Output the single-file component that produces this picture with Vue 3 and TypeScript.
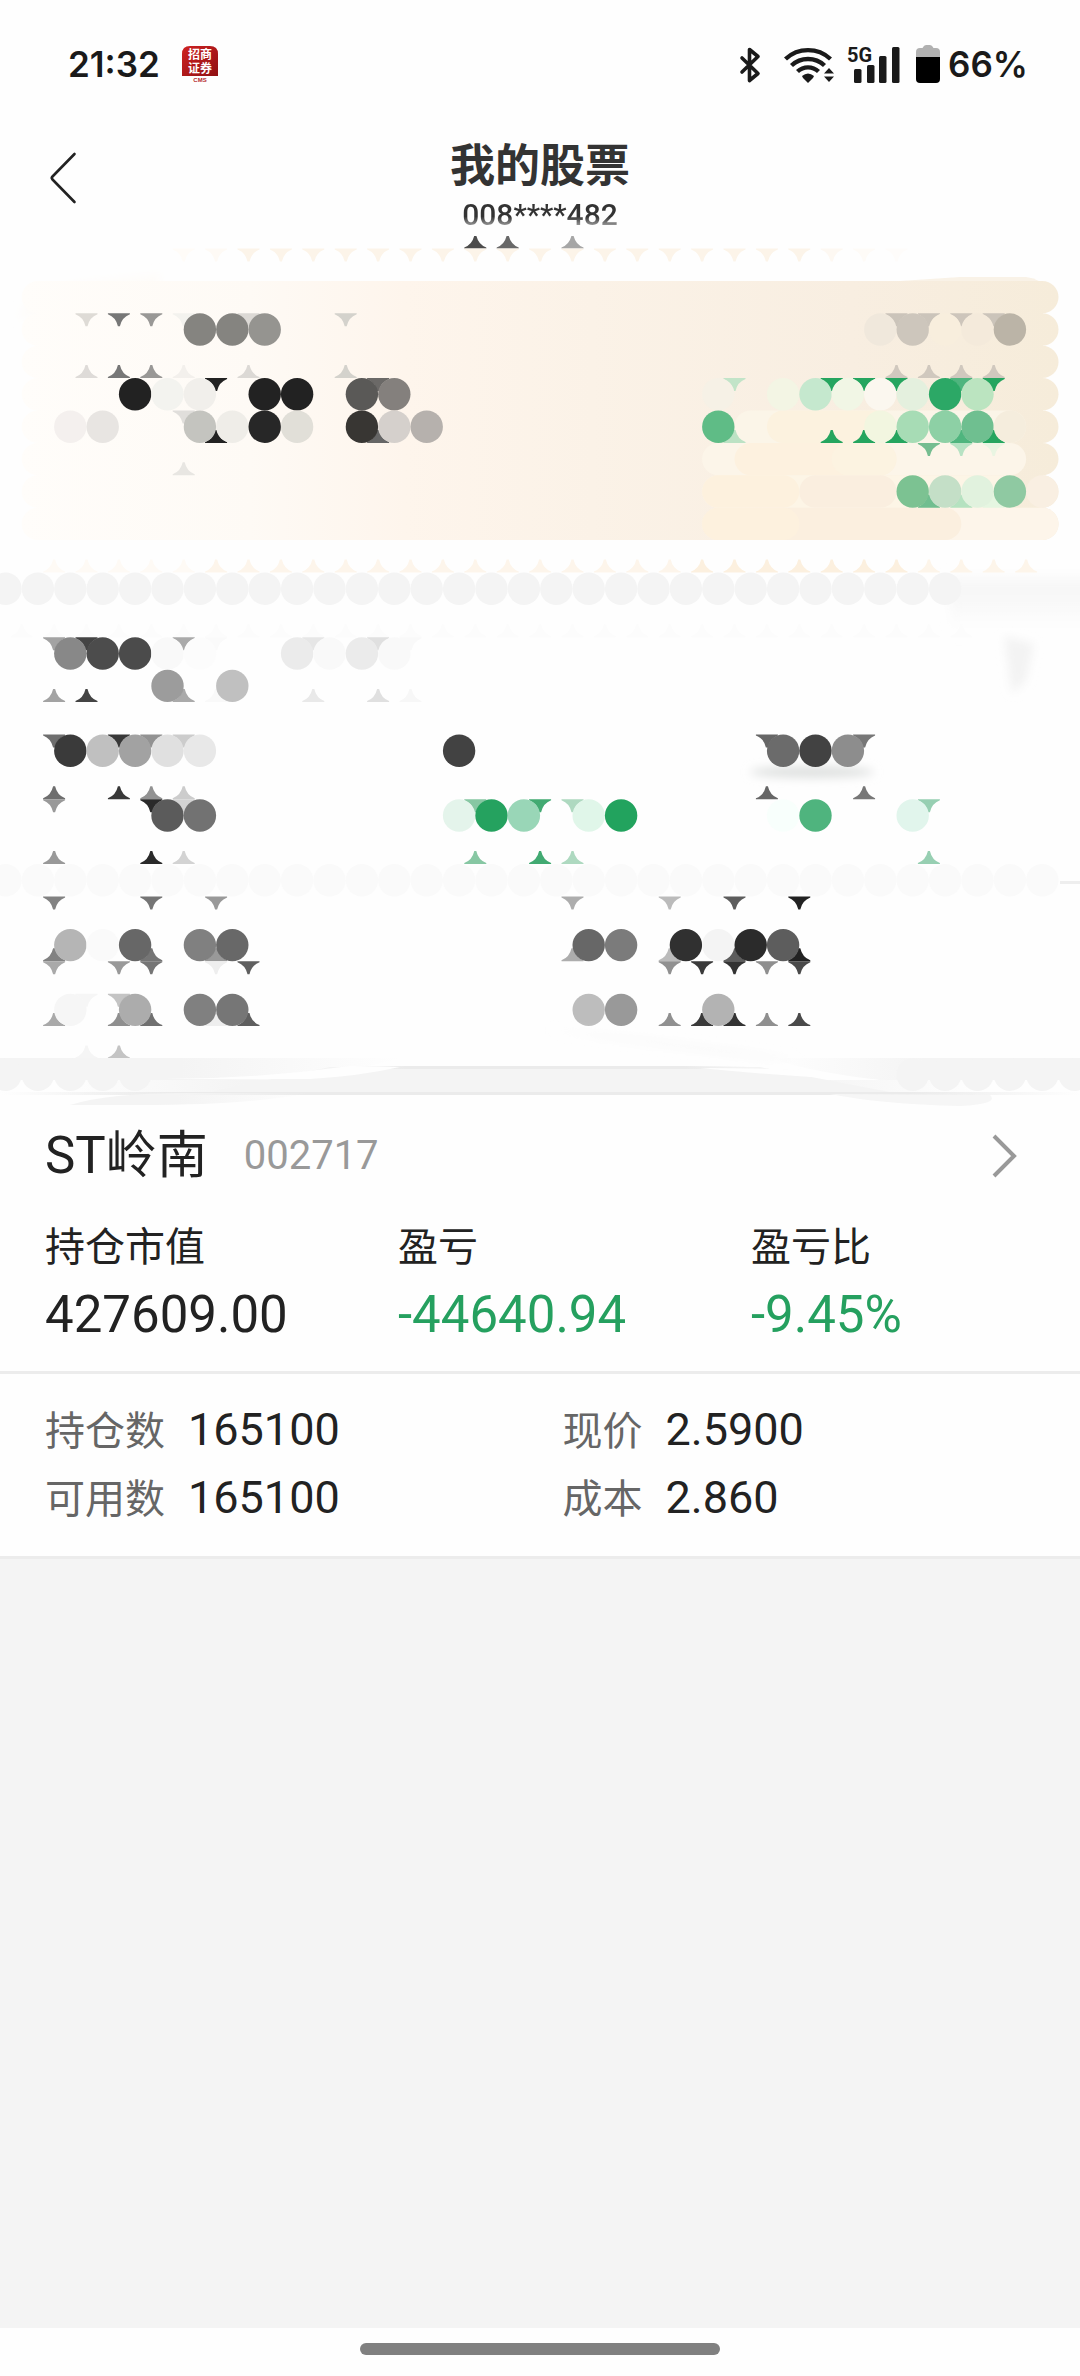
<script setup lang="ts">
type Mark = [number, string]
interface MosaicRow {
  row: number
  dots?: Mark[]
  down?: Mark[]
  up?: Mark[]
}
interface Patch {
  row: number
  from: number
  to: number
  color: string
}

const CELL = 32.4
const ORIGIN = 5.5
const RADIUS = CELL / 2

const centre = (n: number): number => ORIGIN + n * CELL
const repeat = (from: number, to: number, color: string): Mark[] =>
  Array.from({ length: to - from + 1 }, (_, k): Mark => [from + k, color])

// Spikes are the gaps left between neighbouring dots, on one side of a row edge.
const spike = (col: number, row: number, dir: 1 | -1): string => {
  const x = centre(col) + RADIUS
  const y = centre(row) - dir * RADIUS
  return `M${x - 11} ${y}V${y + dir}Q${x - 3} ${y + 4 * dir} ${x - 1} ${y + 13 * dir}H${x + 1}Q${x + 3} ${y + 4 * dir} ${x + 11} ${y + dir}V${y}Z`
}

const cardRows = [9, 10, 11, 12, 13, 14, 15, 16]

const patches: Patch[] = [
  { row: 13, from: 23, to: 31, color: '#fbf5e8' },
  { row: 13, from: 24, to: 27, color: '#fcf2df' },
  { row: 14, from: 22, to: 31, color: '#fcf5e9' },
  { row: 14, from: 23, to: 27, color: '#fdf1df' },
  { row: 14, from: 26, to: 27, color: '#fcf3e1' },
  { row: 15, from: 22, to: 31, color: '#fdf5e6' },
  { row: 15, from: 22, to: 24, color: '#fdf1de' },
  { row: 15, from: 25, to: 27, color: '#faeedf' },
  { row: 15, from: 32, to: 32, color: '#f9efe2' },
  { row: 16, from: 22, to: 32, color: '#fdf5ea' },
  { row: 16, from: 22, to: 29, color: '#fbefdf' },
  { row: 16, from: 22, to: 24, color: '#fdf1de' },
]

const G = '#25a55f'
const rows: MosaicRow[] = [
  { row: 7, up: [[14, '#4c4c4c'], [15, '#686868'], [17, '#a6a6a6']] },
  { row: 8, down: [[5, '#fffcf8'], [6, '#fefaf5'], ...repeat(7, 24, '#fcf4e9'), [25, '#fdf8f2'], [26, '#fefbf7'], [27, '#fefcfa']] },
  {
    row: 10,
    down: [[2, '#dedbd6'], [3, '#777777'], [4, '#999896'], [5, '#f3f2ee'], [7, '#dcd9d5'], [10, '#d4d2cc'], [27, '#cbc4ba'], [28, '#cbc4ba'], [29, '#cdc5bb'], [30, '#cbc4ba']],
    dots: [[6, '#858480'], [7, '#858480'], [8, '#959490'], [27, '#f0e8dc'], [28, '#cdc6bc'], [29, '#f8eedd'], [30, '#f4eadb'], [31, '#bbb4a7']],
  },
  { row: 11, up: [[2, '#dedbd8'], [3, '#777777'], [4, '#999896'], [5, '#f3f0ec'], [7, '#dcd9d5'], [10, '#d4d2cc'], ...repeat(27, 30, '#d0c8be')] },
  {
    row: 12,
    down: [[6, '#222222'], [11, '#6b6967'], [22, '#c2e4c8'], [25, G], [26, G], [27, G], [29, '#4fb57e'], [30, G]],
    dots: [[4, '#222222'], [5, '#f3f3ef'], [6, '#f1efeb'], [8, '#222222'], [9, '#222222'], [11, '#5a5957'], [12, '#84807d'], [22, '#f6f1e6'], [24, '#f3f5e4'], [25, '#c5e8ce'], [26, '#f1f6e5'], [27, '#fbf7ef'], [28, '#e4f0de'], [29, '#2ca866'], [30, '#bbe4c0']],
  },
  {
    row: 13,
    down: [[5, '#e0dedb']],
    up: [[6, '#222222'], [11, '#666666'], [22, '#bce2c4'], [25, G], [26, G], [27, G], [29, '#4fb57e'], [30, G]],
    dots: [[2, '#f4f0ee'], [3, '#e8e5e2'], [6, '#c4c4bf'], [7, '#efede8'], [8, '#272727'], [9, '#e1dfd8'], [11, '#383633'], [12, '#d5d0cc'], [13, '#b6b1ad'], [22, '#5fbc86'], [27, '#f2f6e0'], [28, '#a7dcb5'], [29, '#8dd0a5'], [30, '#6fbf90'], [31, '#f5eddd']],
  },
  { row: 14, down: [[28, '#75bd90'], [29, '#b7e2c3'], [30, '#e9f5e2']], up: [[5, '#e8e6e2']] },
  {
    row: 15,
    up: [[28, '#70be8f'], [29, '#b5e2c0'], [30, '#e5f6e1']],
    dots: [[28, '#7cc292'], [29, '#c4dfc7'], [30, '#e1f2de'], [31, '#8fc9a2']],
  },
  { row: 17, up: [...repeat(1, 5, '#fefaf5'), ...repeat(6, 20, '#fdf5eb'), ...repeat(21, 27, '#fcf0df'), ...repeat(28, 31, '#fdf5ea')] },
  { row: 18, dots: repeat(0, 29, '#f4f4f4') },
  { row: 19, up: repeat(0, 29, '#fcfcfc') },
  {
    row: 20,
    down: [[1, '#a3a3a3'], [2, '#444444'], [5, '#aaaaaa'], [6, '#fafafa'], [9, '#e6e6e6'], [11, '#e0e0e0'], [12, '#f9f9f9']],
    dots: [[2, '#888888'], [3, '#4c4c4c'], [4, '#4b4b4b'], [5, '#f9f9f9'], [6, '#fcfcfc'], [9, '#ebebeb'], [10, '#f9f9f9'], [11, '#ebebeb'], [12, '#f9f9f9']],
  },
  {
    row: 21,
    up: [[1, '#a3a3a3'], [2, '#444444'], [5, '#aaaaaa'], [6, '#f9f9f9'], [9, '#e9e9e9'], [11, '#e0e0e0'], [12, '#f7f7f7']],
    dots: [[5, '#9c9c9c'], [7, '#c0c0c0']],
  },
  {
    row: 23,
    down: [[1, '#6e6e6e'], [3, '#383838'], [4, '#929292'], [5, '#cccccc'], [23, '#666666'], [26, '#777777']],
    dots: [[2, '#3a3a3a'], [3, '#c0c0c0'], [4, '#a2a2a2'], [5, '#e0e0e0'], [6, '#e8e8e8'], [14, '#424242'], [24, '#6b6b6b'], [25, '#424242'], [26, '#8d8d8d']],
  },
  { row: 24, up: [[1, '#6e6e6e'], [3, '#383838'], [4, '#929292'], [5, '#cccccc'], [23, '#666666'], [26, '#777777']] },
  {
    row: 25,
    down: [[1, '#999999'], [4, '#2a2a2a'], [5, '#d3d3d3'], [14, '#87c7a3'], [16, '#42aa72'], [17, '#aed9c0'], [28, '#97cfb2']],
    dots: [[5, '#5b5b5b'], [6, '#727272'], [14, '#e4f4eb'], [15, '#25a25f'], [16, '#99d6b7'], [18, '#e0f6e9'], [19, '#22a35e'], [24, '#f8fffc'], [25, '#4fb47e'], [28, '#e1f5ec']],
  },
  { row: 26, up: [[1, '#999999'], [4, '#2a2a2a'], [5, '#d3d3d3'], [14, '#87c7a3'], [16, '#42aa72'], [17, '#aed9c0'], [28, '#97cfb2']] },
  { row: 27, dots: repeat(0, 32, '#fafafa') },
  { row: 28, down: [[1, '#828282'], [4, '#757575'], [6, '#999999'], [17, '#adadad'], [20, '#bbbbbb'], [22, '#5d5d5d'], [24, '#222222']] },
  {
    row: 29,
    up: [[1, '#828282'], [4, '#757575'], [6, '#999999'], [17, '#adadad'], [20, '#bbbbbb'], [22, '#5d5d5d'], [24, '#222222']],
    dots: [[2, '#b5b5b5'], [3, '#fafafa'], [4, '#676767'], [6, '#808080'], [7, '#686868'], [18, '#676767'], [19, '#7b7b7b'], [21, '#303030'], [22, '#f4f4f4'], [23, '#2b2b2b'], [24, '#5d5d5d']],
  },
  { row: 30, down: [[1, '#a9a9a9'], [3, '#999999'], [4, '#757575'], [6, '#eeeeee'], [7, '#5f5f5f'], [20, '#909090'], [21, '#3a3a3a'], [22, '#333333'], [23, '#8f8f8f'], [24, '#4a4a4a']] },
  {
    row: 31,
    down: [[2, '#f6f6f6'], [3, '#c4c4c4']],
    up: [[1, '#a9a9a9'], [3, '#8f8f8f'], [4, '#707070'], [6, '#eeeeee'], [7, '#5f5f5f'], [20, '#909090'], [21, '#3a3a3a'], [22, '#333333'], [23, '#8f8f8f'], [24, '#4a4a4a']],
    dots: [[2, '#f6f6f6'], [4, '#acacac'], [6, '#808080'], [7, '#767676'], [18, '#bdbdbd'], [19, '#999999'], [22, '#b3b3b3']],
  },
  { row: 32, up: [[2, '#f5f5f5'], [3, '#c4c4c4']] },
]

const totals = [
  { label: '持仓市值', value: '427609.00', loss: false },
  { label: '盈亏', value: '-44640.94', loss: true },
  { label: '盈亏比', value: '-9.45%', loss: true },
]
const details = [
  { label: '持仓数', value: '165100' },
  { label: '现价', value: '2.5900' },
  { label: '可用数', value: '165100' },
  { label: '成本', value: '2.860' },
]
</script>

<template>
  <div class="page">
    <div class="status">
      <span class="clock">21:32</span>
      <svg class="app-icon" viewBox="0 0 36 38" width="36" height="38" aria-hidden="true">
        <defs>
          <linearGradient id="red" x1="0" y1="0" x2="1" y2="1">
            <stop offset="0" stop-color="#cf2222" />
            <stop offset="1" stop-color="#8f1012" />
          </linearGradient>
        </defs>
        <path d="M0 31V9Q0 1 8 1H28Q36 1 36 9V31Z" fill="url(#red)" />
        <g class="icon-text" fill="#fff" text-anchor="middle">
          <text x="18" y="14">招商</text>
          <text x="18" y="28">证券</text>
        </g>
        <text class="icon-sub" x="18" y="37" text-anchor="middle" fill="#b5282a">CMS</text>
      </svg>
      <div class="indicators">
        <svg viewBox="738 42 204 42" width="204" height="42" aria-hidden="true">
          <path d="M741 57L757 72.500L748.500 79.500V48.500L757 55.500L741 71" fill="none" stroke="#1a1a1a" stroke-width="3.600" stroke-linejoin="round" stroke-linecap="round" />
          <g fill="none" stroke="#1a1a1a" stroke-width="4.400">
            <path d="M784.500 58A33 33 0 0 1 829.500 58" />
            <path d="M790.500 64.500A24 24 0 0 1 823.500 64.500" />
            <path d="M796.500 70.500A15.500 15.500 0 0 1 817.500 70.500" />
          </g>
          <path d="M801 75Q807 70 813 75L812 77L807 82L802 77Z" fill="#1a1a1a" />
          <path d="M823 72.500L828 67L833 72.500ZM823 75.500H833L828 81Z" fill="#1a1a1a" />
          <text class="net" x="846" y="61" fill="#1a1a1a">5G</text>
          <g fill="#1a1a1a">
            <rect x="853" y="68" width="7.500" height="14" rx="1.500" />
            <rect x="866" y="64" width="7.500" height="18" rx="1.500" />
            <rect x="878" y="55" width="7.500" height="27" rx="1.500" />
            <rect x="891" y="46" width="7.500" height="36" rx="1.500" />
          </g>
          <path d="M915 57V51Q915 47 919 47H921.500Q923 44 925 44H929Q931 44 932.500 47H935Q939 47 939 51V57Z" fill="#b1b1b1" />
          <path d="M915 56H939V78Q939 82 935 82H919Q915 82 915 78Z" fill="#000" />
        </svg>
        <span class="percent">66%</span>
      </div>
    </div>

    <header class="header">
      <button class="back" type="button" aria-label="返回">
        <svg viewBox="0 0 28 52" width="28" height="52">
          <path d="M25.500 2L3.500 24.500Q2 26 3.500 27.500L25.500 50" fill="none" stroke="#222" stroke-width="2.600" stroke-linecap="round" />
        </svg>
      </button>
      <h1 class="title">我的股票</h1>
      <p class="account">008****482</p>
    </header>

    <svg class="mosaic" viewBox="0 236 1080 872" aria-hidden="true">
      <defs>
        <linearGradient id="cream" gradientUnits="userSpaceOnUse" x1="22" y1="0" x2="1058" y2="0">
          <stop offset="0" stop-color="#fffdfa" />
          <stop offset="0.220" stop-color="#fefaf5" />
          <stop offset="0.370" stop-color="#fef5ec" />
          <stop offset="0.550" stop-color="#fbf2e7" />
          <stop offset="0.800" stop-color="#f8eee1" />
          <stop offset="1" stop-color="#f6ecda" />
        </linearGradient>
        <linearGradient id="fade-left" x1="0" x2="1">
          <stop offset="0" stop-color="#f4f4f4" />
          <stop offset="0.450" stop-color="#f4f4f4" />
          <stop offset="1" stop-color="#f4f4f4" stop-opacity="0" />
        </linearGradient>
        <linearGradient id="fade-right" x1="1" x2="0">
          <stop offset="0" stop-color="#f4f4f4" />
          <stop offset="0.500" stop-color="#f4f4f4" />
          <stop offset="1" stop-color="#f4f4f4" stop-opacity="0" />
        </linearGradient>
        <linearGradient id="smudge-down" x1="0" y1="0" x2="0" y2="1">
          <stop offset="0" stop-color="#fefefe" stop-opacity="0" />
          <stop offset="0.200" stop-color="#f7f7f7" />
          <stop offset="0.500" stop-color="#f8f8f8" />
          <stop offset="1" stop-color="#fefefe" stop-opacity="0" />
        </linearGradient>
        <linearGradient id="line-fade" x1="0" x2="1">
          <stop offset="0" stop-color="#ebebeb" stop-opacity="0" />
          <stop offset="0.160" stop-color="#ebebeb" />
          <stop offset="0.840" stop-color="#ebebeb" />
          <stop offset="1" stop-color="#ebebeb" stop-opacity="0" />
        </linearGradient>
        <linearGradient id="band" x1="0" x2="1">
          <stop offset="0" stop-color="#f4f4f4" stop-opacity="0" />
          <stop offset="0.200" stop-color="#f4f4f4" />
          <stop offset="0.800" stop-color="#f4f4f4" />
          <stop offset="1" stop-color="#f4f4f4" stop-opacity="0" />
        </linearGradient>
        <filter id="soft" x="-40%" y="-80%" width="180%" height="260%">
          <feGaussianBlur stdDeviation="5" />
        </filter>
      </defs>

      <path d="M18 318Q30 286 100 281L160 274V290L60 318Z" fill="#fefcf9" filter="url(#soft)" />
      <path d="M900 281L960 277H1026Q1042 279 1048 290Z" fill="#f9f2e7" />
      <rect x="37" y="281" width="1006" height="259" fill="url(#cream)" />
      <template v-for="r in cardRows" :key="r">
        <circle :cx="centre(1)" :cy="centre(r)" :r="RADIUS" fill="url(#cream)" />
        <circle :cx="centre(32)" :cy="centre(r)" :r="RADIUS" fill="url(#cream)" />
      </template>
      <rect
        v-for="(p, k) in patches"
        :key="'p' + k"
        :x="centre(p.from) - RADIUS"
        :y="centre(p.row) - RADIUS"
        :width="(p.to - p.from + 1) * CELL"
        :height="CELL"
        :rx="RADIUS"
        :fill="p.color"
      />

      <rect x="950" y="568" width="160" height="70" fill="url(#smudge-down)" filter="url(#soft)" />
      <path d="M1004 636L1034 644L1026 680L1012 694Z" fill="#f3f3f3" filter="url(#soft)" />
      <ellipse cx="812" cy="772" rx="62" ry="6" fill="#dfe1e0" filter="url(#soft)" />

      <g v-for="r in rows" :key="r.row">
        <path v-for="m in r.down" :key="'d' + m[0]" :d="spike(m[0], r.row, 1)" :fill="m[1]" />
        <path v-for="m in r.up" :key="'u' + m[0]" :d="spike(m[0], r.row, -1)" :fill="m[1]" />
        <circle v-for="m in r.dots" :key="'c' + m[0]" :cx="centre(m[0])" :cy="centre(r.row)" :r="RADIUS" :fill="m[1]" />
      </g>

      <rect x="1060" y="881" width="20" height="3" fill="#eeeeee" />

      <rect x="60" y="1080" width="920" height="15" fill="url(#band)" />
      <path d="M330 1067H760L900 1094H200Z" fill="#f4f4f4" />
      <rect x="340" y="1066" width="410" height="3" fill="url(#line-fade)" />
      <rect x="0" y="1092" width="1080" height="3" fill="url(#line-fade)" />
      <path d="M0 1058H400Q360 1070 280 1080H0Z" fill="url(#fade-left)" />
      <path d="M1080 1058H770Q810 1072 880 1080H1080Z" fill="url(#fade-right)" />
      <path d="M150 1079H310Q360 1076 400 1067L350 1066Q250 1080 150 1079Z" fill="#fefefe" />
      <path d="M880 1080Q800 1078 700 1068Q760 1068 800 1070Q840 1077 880 1080Z" fill="#fefefe" />
      <circle v-for="n in 5" :key="'l' + n" :cx="centre(n - 1)" :cy="centre(33)" :r="RADIUS" fill="#f4f4f4" />
      <circle v-for="n in 6" :key="'r' + n" :cx="centre(n + 27)" :cy="centre(33)" :r="RADIUS" fill="#f4f4f4" />
      <path d="M70 1105Q110 1092 200 1093H310Q250 1105 140 1105Z" fill="url(#fade-left)" />
      <path d="M830 1094Q880 1104 960 1106Q1000 1104 990 1095Z" fill="#f6f6f6" />
      <path d="M550 1030Q640 1036 800 1060L760 1058Q660 1046 550 1030Z" fill="#f7f7f7" filter="url(#soft)" />
    </svg>

    <main class="stock">
      <a class="name-row" href="#detail">
        <span class="name">ST岭南</span>
        <span class="code">002717</span>
        <svg class="chevron" viewBox="0 0 26 44" width="26" height="44" aria-hidden="true">
          <path d="M3 2L23 22L3 42" fill="none" stroke="#999" stroke-width="4" />
        </svg>
      </a>
      <dl class="totals">
        <div v-for="t in totals" :key="t.label">
          <dt>{{ t.label }}</dt>
          <dd :class="{ loss: t.loss }">{{ t.value }}</dd>
        </div>
      </dl>
      <dl class="details">
        <div v-for="d in details" :key="d.label">
          <dt>{{ d.label }}</dt>
          <dd>{{ d.value }}</dd>
        </div>
      </dl>
    </main>

    <div class="filler"></div>
    <footer class="home"><span class="handle"></span></footer>
  </div>
</template>

<style>
body {
  background: #fefefe;
}
</style>

<style scoped>
.page {
  display: flex;
  flex-direction: column;
  min-height: 100vh;
  background: #fefefe;
  color: #222;
  font-family: Roboto, "Noto Sans CJK SC", sans-serif;
}
.status {
  display: flex;
  align-items: center;
  height: 128px;
  padding: 0 52px 0 68px;
  color: #1a1a1a;
  font-family: Inter, "Noto Sans CJK SC", sans-serif;
  font-size: 35px;
  font-weight: 600;
}
.app-icon {
  margin-left: 22px;
}
.icon-text {
  font: 700 12px/12px "Noto Sans CJK SC", sans-serif;
}
.icon-sub {
  font: 700 6px "Liberation Sans", sans-serif;
}
.net {
  font: 700 20px Roboto, sans-serif;
}
.indicators {
  display: flex;
  align-items: center;
  gap: 5px;
  margin-left: auto;
}
.header {
  position: relative;
  box-sizing: border-box;
  height: 108px;
  padding-top: 13px;
  text-align: center;
}
.back {
  position: absolute;
  top: 24px;
  left: 49px;
  display: flex;
  padding: 0;
  border: 0;
  background: none;
}
.title {
  margin: 0;
  color: #333;
  font-size: 45px;
  font-weight: 700;
  line-height: 52px;
}
.account {
  margin: 7px 0 0;
  background: linear-gradient(#333 55%, #aaa 90%);
  background-clip: text;
  color: transparent;
  font-size: 30px;
  font-weight: 500;
  line-height: 30px;
}
.mosaic {
  display: block;
  width: 100%;
}
.stock {
  border-bottom: 3px solid #ececec;
}
.name-row {
  display: flex;
  align-items: center;
  padding: 18px 63px 0 45px;
  color: inherit;
  line-height: 60px;
  text-decoration: none;
}
.name {
  font-size: 51px;
}
.code {
  margin-left: 36px;
  color: #999;
  font-size: 40px;
}
.chevron {
  margin-left: auto;
}
dl,
dd {
  margin: 0;
}
.totals {
  display: grid;
  grid-template-columns: 1fr 1fr 329px;
  padding: 37px 0 26px 45px;
  border-bottom: 3px solid #ececec;
}
.totals dt {
  font-size: 40px;
  line-height: 50px;
}
.totals dd {
  margin-top: 12px;
  font-size: 51px;
  line-height: 60px;
}
.totals .loss {
  color: #25a05f;
}
.details {
  display: grid;
  grid-template-columns: 1fr 1fr;
  grid-auto-rows: 68px;
  padding: 22px 0 24px 45px;
}
.details div {
  display: flex;
  align-items: baseline;
  gap: 23px;
  line-height: 68px;
}
.details dt {
  color: #666;
  font-size: 40px;
}
.details dd {
  font-size: 45px;
}
.filler {
  flex: 1;
  background: #f4f4f4;
}
.home {
  display: flex;
  justify-content: center;
  align-items: center;
  height: 48px;
}
.handle {
  width: 360px;
  height: 12px;
  margin-bottom: 6px;
  border-radius: 6px;
  background: #808080;
}
</style>
